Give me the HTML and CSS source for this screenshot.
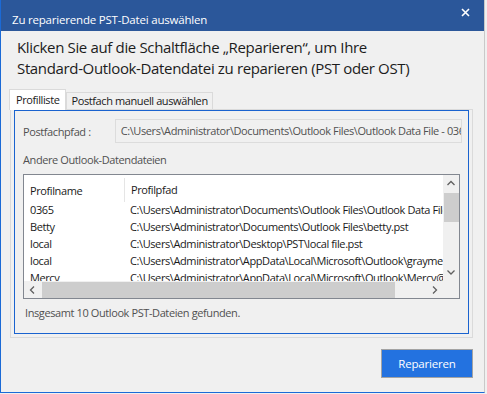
FILE: index.html
```html
<!DOCTYPE html>
<html lang="de">
<head>
  <meta charset="UTF-8" />
  <title>Zu reparierende PST-Datei auswählen</title>
  <link rel="stylesheet" href="styles.css">
</head>
<body>
  <div class="window">
    <div class="titlebar">
      <span class="title">Zu reparierende PST-Datei auswählen</span>
      <svg class="close" width="9" height="9" viewBox="0 0 9 9">
        <path d="M1 1 L8 8 M8 1 L1 8" stroke="#fff" stroke-width="1.6" />
      </svg>
    </div>

    <div class="content">
      <p class="intro">Klicken Sie auf die Schaltfläche „Reparieren“, um Ihre<br>Standard-Outlook-Datendatei zu reparieren (PST oder OST)</p>

      <div class="tabs">
        <div class="tab active">Profilliste</div>
        <div class="tab">Postfach manuell auswählen</div>
      </div>

      <div class="tabpage">
        <div class="panel">
          <div class="path-row">
            <span class="label">Postfachpfad :</span>
            <div class="textbox">C:\Users\Administrator\Documents\Outlook Files\Outlook Data File - 0365.pst</div>
          </div>

          <div class="label other">Andere Outlook-Datendateien</div>

          <div class="listbox">
            <div class="list-main">
              <div class="list-area">
                <div class="row head">
                  <span class="col-name">Profilname</span>
                  <span class="col-path sep">Profilpfad</span>
                </div>
                <div class="row"><span class="col-name">0365</span><span class="col-path">C:\Users\Administrator\Documents\Outlook Files\Outlook Data File - 0365.pst</span></div>
                <div class="row"><span class="col-name">Betty</span><span class="col-path">C:\Users\Administrator\Documents\Outlook Files\betty.pst</span></div>
                <div class="row"><span class="col-name">local</span><span class="col-path">C:\Users\Administrator\Desktop\PST\local file.pst</span></div>
                <div class="row"><span class="col-name">local</span><span class="col-path">C:\Users\Administrator\AppData\Local\Microsoft\Outlook\grayme.pst</span></div>
                <div class="row"><span class="col-name">Mercy</span><span class="col-path">C:\Users\Administrator\AppData\Local\Microsoft\Outlook\Mercy@mail.pst</span></div>
              </div>
              <div class="vscroll">
                <svg class="arrow" width="16" height="17" viewBox="0 0 16 17"><path d="M4.5 10 L8 6.5 L11.5 10" fill="none" stroke="#606060" stroke-width="1.3" /></svg>
                <div class="vtrack"><div class="vthumb"></div></div>
                <svg class="arrow" width="16" height="17" viewBox="0 0 16 17"><path d="M4.5 6.5 L8 10 L11.5 6.5" fill="none" stroke="#606060" stroke-width="1.3" /></svg>
              </div>
            </div>
            <div class="hscroll">
              <svg class="arrow" width="17" height="16" viewBox="0 0 17 16"><path d="M10 4.5 L6.5 8 L10 11.5" fill="none" stroke="#606060" stroke-width="1.3" /></svg>
              <div class="htrack"><div class="hthumb"></div></div>
              <svg class="arrow" width="17" height="16" viewBox="0 0 17 16"><path d="M7 4.5 L10.5 8 L7 11.5" fill="none" stroke="#606060" stroke-width="1.3" /></svg>
              <div class="corner"></div>
            </div>
          </div>

          <div class="label status">Insgesamt 10 Outlook PST-Dateien gefunden.</div>
        </div>
      </div>

      <div class="actions">
        <button class="btn">Reparieren</button>
      </div>
    </div>
  </div>
</body>
</html>
```

FILE: styles.css
```css
* { margin: 0; padding: 0; box-sizing: border-box; font-family: 'Open Sans', 'Noto Sans', sans-serif; }

body {
  background: #f0f0f0;
  width: 487px;
  height: 394px;
  overflow: hidden;
}

.window {
  width: 485px;
  height: 393px;
  background: #f0f0f0;
  border-left: 1px solid #1b6ad6;
  border-bottom: 1px solid #1b6ad6;
  border-right: 1px solid #c9c9c9;
}

.titlebar {
  height: 31px;
  background: #2b579a;
  color: #fff;
  display: flex;
  justify-content: space-between;
  padding: 0 14px 0 11px;
}

.title {
  font-size: 11.5px;
  letter-spacing: -0.2px;
  padding-top: 12px;
}

.close {
  margin-top: 8px;
}

.content {
  padding: 0 12px 0 8px;
}

.intro {
  font-size: 15px;
  letter-spacing: -0.35px;
  line-height: 21px;
  color: #1c1c1c;
  padding: 6px 0 0 8px;
  height: 57px;
}

.tabs {
  display: flex;
  align-items: flex-end;
  height: 21px;
  position: relative;
  z-index: 1;
}

.tab {
  font-size: 11px;
  letter-spacing: -0.4px;
  color: #1a1a1a;
  background: #f0f0f0;
  border: 1px solid #dadada;
  border-bottom: none;
  height: 17px;
  line-height: 16px;
  padding: 0 4px;
}

.tab.active {
  background: #fff;
  height: 21px;
  line-height: 19px;
  padding: 0 6px;
  margin-bottom: -1px;
}

.tabpage {
  width: 463px;
  height: 229px;
  border: 1px solid #dadada;
  padding: 0 3px 3px 3px;
  margin-left: 1px;
}

.panel {
  height: 100%;
  border: 1px solid #1a63cf;
  padding: 8px 6px 0 8px;
}

.label {
  font-size: 11px;
  letter-spacing: -0.4px;
  color: #505050;
}

.path-row {
  display: flex;
  align-items: center;
  gap: 24px;
}

.textbox {
  flex: 1;
  height: 24px;
  border: 1px solid #dcdcdc;
  background: #f0f0f0;
  color: #505050;
  font-size: 11px;
  letter-spacing: -0.4px;
  padding: 3px 5px;
  white-space: nowrap;
  overflow: hidden;
}

.other {
  margin-top: 9px;
  height: 22px;
}

.listbox {
  width: 437px;
  height: 125px;
  border: 1px solid #828790;
  background: #fff;
  display: flex;
  flex-direction: column;
}

.list-main {
  flex: 1;
  display: flex;
  overflow: hidden;
}

.list-area {
  flex: 1;
  overflow: hidden;
  padding-top: 3px;
}

.row {
  display: flex;
  height: 17px;
  font-size: 11px;
  letter-spacing: -0.4px;
  color: #1a1a1a;
  white-space: nowrap;
}

.row.head {
  height: 24px;
  align-items: center;
}

.col-name {
  width: 100px;
  padding-left: 6px;
  flex-shrink: 0;
}

.col-path {
  padding-left: 6px;
}

.sep {
  border-left: 1px solid #e5e5e5;
  height: 24px;
  line-height: 24px;
}

.vscroll {
  width: 16px;
  background: #f0f0f0;
  display: flex;
  flex-direction: column;
}

.arrow {
  display: block;
  flex-shrink: 0;
}

.vtrack {
  flex: 1;
  width: 100%;
}

.vthumb {
  width: 15px;
  height: 29px;
  margin: 1px auto 0;
  background: #cdcdcd;
}

.hscroll {
  height: 17px;
  background: #f0f0f0;
  display: flex;
  align-items: center;
}

.htrack {
  flex: 1;
  height: 100%;
  padding: 1px 1px 0 1px;
}

.hthumb {
  width: 353px;
  height: 100%;
  background: #cdcdcd;
}

.corner {
  width: 16px;
  height: 100%;
  background: #f0f0f0;
}

.status {
  margin-top: 6px;
  padding-left: 2px;
}

.actions {
  display: flex;
  justify-content: flex-end;
  padding-top: 11px;
}

.btn {
  width: 92px;
  height: 29px;
  margin-right: -1px;
  background: #2372e0;
  border: 1px solid #a3a3a3;
  color: #fff;
  font-size: 11.5px;
  letter-spacing: -0.2px;
}
```
